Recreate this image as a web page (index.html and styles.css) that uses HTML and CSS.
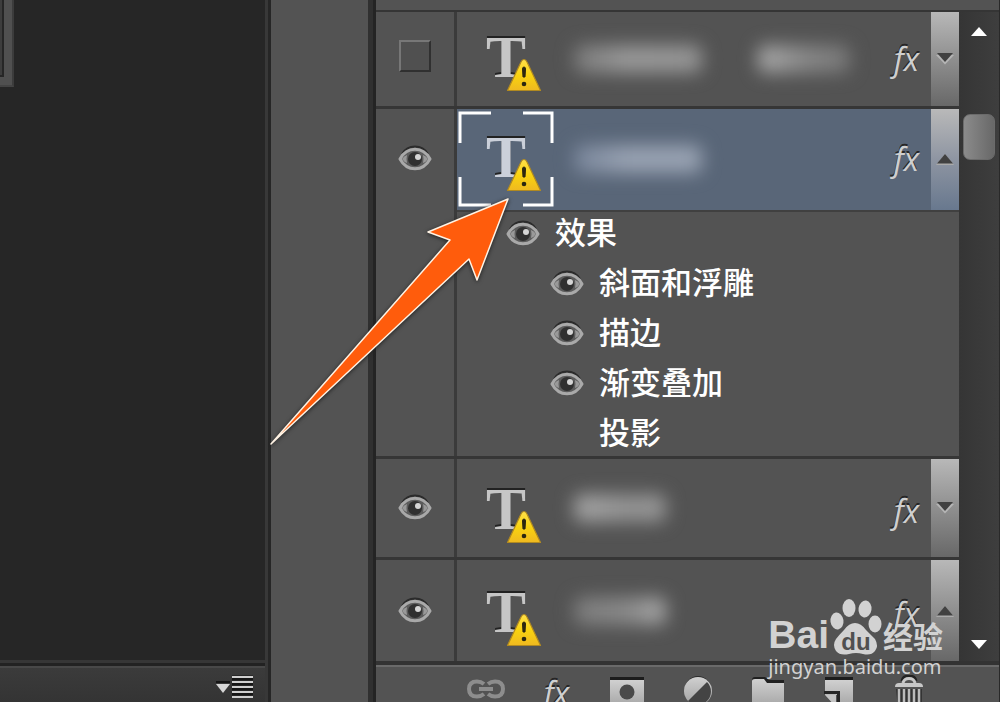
FILE: index.html
```html
<!DOCTYPE html>
<html lang="zh-CN">
<head>
  <meta charset="UTF-8">
  <meta name="viewport" content="width=device-width, initial-scale=1">
  <title>图层面板</title>
  <link rel="stylesheet" href="styles.css">
</head>
<body>
  <svg class="defs" aria-hidden="true">
    <defs>
      <linearGradient id="metal" x1="0" y1="0" x2="0" y2="1">
        <stop offset="0" stop-color="#d0d0d0"/>
        <stop offset="1" stop-color="#a2a2a2"/>
      </linearGradient>
      <linearGradient id="gold" x1="0" y1="0" x2="0" y2="1">
        <stop offset="0" stop-color="#ffe04a"/>
        <stop offset="0.5" stop-color="#f9d30f"/>
        <stop offset="1" stop-color="#efb920"/>
      </linearGradient>
      <symbol id="eye" viewBox="0 0 34 28">
        <path d="M4 9C10 -1 24 -1 30 9" fill="none" stroke="#2b2b2b" stroke-width="2"/>
        <path d="M2 14C9 1 25 1 32 14C25 27 9 27 2 14Z" fill="#5c5c5c" stroke="#a9a9a9" stroke-width="3" stroke-linejoin="round"/>
        <path d="M4 14Q6 11 9 10Q8 14 9 18Q6 17 4 14ZM30 14Q28 11 25 10Q26 14 25 18Q28 17 30 14Z" fill="#999"/>
        <circle cx="17" cy="14" r="7" fill="#303030"/>
        <circle cx="20" cy="12" r="3" fill="#d5d5d5"/>
      </symbol>
      <symbol id="warning" viewBox="0 0 36 34">
        <path d="M18 1.500Q20 1.500 21 4L34.500 32.500H1.500L15 4Q16 1.500 18 1.500Z" fill="url(#gold)" stroke="#b18a20" stroke-width="1.200" stroke-linejoin="round"/>
        <path d="M16.500 11Q16.500 9 18 9Q19.500 9 19.500 11L19 19H17Z" fill="#2c2710" stroke="#2c2710"/>
        <circle cx="18" cy="26" r="2.300" fill="#2c2710"/>
      </symbol>
      <symbol id="down" viewBox="0 0 18 12">
        <path d="M0 2H18L9 11.500Z" fill="#b5b5b5"/>
        <path d="M1 0H17L9 9Z" fill="#414141"/>
      </symbol>
      <symbol id="up" viewBox="0 0 18 12">
        <path d="M0 12H18L9 1Z" fill="#aaa"/>
        <path d="M1 10.500H17L9 1Z" fill="#414141"/>
      </symbol>
    </defs>
  </svg>

  <main class="app">
    <section class="canvas">
      <div class="document-corner"></div>
      <div class="timeline-bar">
        <button type="button" class="menu-button" aria-label="面板菜单">
          <svg width="38" height="24" viewBox="0 0 38 24">
            <path d="M0 6H14V8H0Z" fill="#151515"/>
            <path d="M0 9H14L7 18Z" fill="#d6d6d6"/>
            <path d="M16 0H37M16 5H37M16 10H37M16 15H37M16 20H37" transform="translate(0 -1)" stroke="#161616" stroke-width="3"/>
            <path d="M16 1H37M16 6H37M16 11H37M16 16H37M16 21H37" transform="translate(0 1)" stroke="#cfcfcf" stroke-width="2"/>
          </svg>
        </button>
      </div>
    </section>

    <div class="dock-gap"></div>

    <aside class="panel">
      <div class="layers">
        <div class="list">
          <div class="layer first">
            <div class="visibility"><input type="checkbox" class="hidden-box" aria-label="显示图层"></div>
            <div class="layer-body">
              <div class="thumb"><span class="type">T</span><svg class="warning"><use href="#warning"/></svg></div>
              <div class="name"><i class="smudge long"></i><i class="smudge second"></i></div>
              <span class="fx">fx</span>
              <button type="button" class="toggle" aria-label="展开效果"><svg width="18" height="12"><use href="#down"/></svg></button>
            </div>
          </div>

          <div class="layer selected">
            <div class="visibility"><button type="button" class="eye" aria-label="隐藏图层"><svg width="34" height="28"><use href="#eye"/></svg></button></div>
            <div class="layer-body">
              <div class="thumb">
                <svg class="brackets" viewBox="0 0 96 96"><path d="M2 32V2H33M65 2H94V32M94 66V94H65M33 94H2V66" fill="none" stroke="#fff" stroke-width="3"/></svg>
                <span class="type">T</span><svg class="warning"><use href="#warning"/></svg>
              </div>
              <div class="name"><i class="smudge long"></i></div>
              <span class="fx">fx</span>
              <button type="button" class="toggle" aria-label="折叠效果"><svg width="18" height="12"><use href="#up"/></svg></button>
            </div>
          </div>

          <div class="effects">
            <div class="visibility"></div>
            <ul class="effect-list">
              <li class="effect-title"><button type="button" class="eye" aria-label="隐藏效果"><svg width="34" height="28"><use href="#eye"/></svg></button><span>效果</span></li>
              <li><button type="button" class="eye" aria-label="隐藏斜面和浮雕"><svg width="34" height="28"><use href="#eye"/></svg></button><span>斜面和浮雕</span></li>
              <li><button type="button" class="eye" aria-label="隐藏描边"><svg width="34" height="28"><use href="#eye"/></svg></button><span>描边</span></li>
              <li><button type="button" class="eye" aria-label="隐藏渐变叠加"><svg width="34" height="28"><use href="#eye"/></svg></button><span>渐变叠加</span></li>
              <li><button type="button" class="eye" aria-label="显示投影"></button><span>投影</span></li>
            </ul>
          </div>

          <div class="layer">
            <div class="visibility"><button type="button" class="eye" aria-label="隐藏图层"><svg width="34" height="28"><use href="#eye"/></svg></button></div>
            <div class="layer-body">
              <div class="thumb"><span class="type">T</span><svg class="warning"><use href="#warning"/></svg></div>
              <div class="name"><i class="smudge"></i></div>
              <span class="fx">fx</span>
              <button type="button" class="toggle" aria-label="展开效果"><svg width="18" height="12"><use href="#down"/></svg></button>
            </div>
          </div>

          <div class="layer">
            <div class="visibility"><button type="button" class="eye" aria-label="隐藏图层"><svg width="34" height="28"><use href="#eye"/></svg></button></div>
            <div class="layer-body">
              <div class="thumb"><span class="type">T</span><svg class="warning"><use href="#warning"/></svg></div>
              <div class="name"><i class="smudge late"></i></div>
              <span class="fx">fx</span>
              <button type="button" class="toggle" aria-label="折叠效果"><svg width="18" height="12"><use href="#up"/></svg></button>
            </div>
          </div>
        </div>

        <div class="scrollbar">
          <button type="button" aria-label="向上滚动"><svg width="16" height="10" viewBox="0 0 16 10"><path d="M0 9L8 0L16 9Z" fill="#fff"/></svg></button>
          <div class="scroll-thumb"></div>
          <button type="button" class="scroll-down" aria-label="向下滚动"><svg width="16" height="10" viewBox="0 0 16 10"><path d="M0 1L8 10L16 1Z" fill="#fff"/></svg></button>
        </div>
      </div>

      <footer class="tools">
        <button type="button" aria-label="链接图层">
          <svg width="38" height="34" viewBox="0 0 38 34">
            <path d="M17 9Q14 6.500 10 6.500Q2 6.500 2 14Q2 21.500 10 21.500Q14 21.500 17 19M21 9Q24 6.500 28 6.500Q36 6.500 36 14Q36 21.500 28 21.500Q24 21.500 21 19M12 14H26" fill="none" stroke="#8d8d8d" stroke-width="4"/>
          </svg>
        </button>
        <button type="button" class="fx">fx</button>
        <button type="button" aria-label="添加蒙版">
          <svg width="38" height="34" viewBox="0 0 38 34">
            <path d="M2 2H36V5H2Z" fill="#1c1c1c"/>
            <path d="M2 5H36V34H2Z" fill="url(#metal)"/>
            <circle cx="19" cy="17" r="7.500" fill="#4a4a4a"/>
          </svg>
        </button>
        <button type="button" aria-label="新建调整图层">
          <svg width="38" height="34" viewBox="0 0 38 34">
            <circle cx="19" cy="14" r="13" fill="#2a2a2a"/>
            <circle cx="19" cy="16" r="14" fill="url(#metal)"/>
            <path d="M9 26L28 7A12 12 0 0 1 9 26Z" fill="#444"/>
          </svg>
        </button>
        <button type="button" aria-label="新建组">
          <svg width="38" height="34" viewBox="0 0 38 34">
            <path d="M3 5Q3 2 6 2H16L20 5H35V9H3Z" fill="#202020"/>
            <path d="M3 6Q3 4 6 4H15L18 8H35V34H3Z" fill="url(#metal)"/>
          </svg>
        </button>
        <button type="button" aria-label="新建图层">
          <svg width="38" height="34" viewBox="0 0 38 34">
            <path d="M5 2H33V5H5Z" fill="#1c1c1c"/>
            <path d="M5 5H33V34H20V20H5Z" fill="url(#metal)"/>
            <path d="M4 16H20V34H17V19H4Z" fill="#262626"/>
            <path d="M5 20H16V32Z" fill="#c4c4c4"/>
          </svg>
        </button>
        <button type="button" aria-label="删除图层">
          <svg width="38" height="34" viewBox="0 0 38 34">
            <path d="M12 6Q13 1 19 1Q25 1 26 6" fill="none" stroke="#222" stroke-width="3"/>
            <path d="M13 8Q14 3.500 19 3.500Q24 3.500 25 8" fill="none" stroke="#c8c8c8" stroke-width="3"/>
            <path d="M5 12Q5 8 9 8H29Q33 8 33 12Z" fill="#c8c8c8"/>
            <path d="M6 14H32V34H8Z" fill="#343434"/>
            <path d="M9 14V34M14 14V34M19 14V34M24 14V34M29 14V34" stroke="#bcbcbc" stroke-width="2.500"/>
          </svg>
        </button>
      </footer>

      <svg class="pointer" width="250" height="256" viewBox="0 0 250 256" aria-hidden="true">
        <path d="M242 5L162 38L184 46L5 250L203 65L211 86Z" fill="#ff5c0c" stroke="#fff3e4" stroke-width="1.500" stroke-linejoin="round"/>
      </svg>

      <div class="watermark">
        <div class="brand">
          <span class="bai">Bai</span>
          <svg class="paw" width="54" height="58" viewBox="0 0 54 58">
            <g fill="#d2d2d2">
              <ellipse cx="8" cy="23" rx="6.500" ry="8.500" transform="rotate(-8 8 23)"/>
              <ellipse cx="20" cy="10" rx="6.500" ry="9"/>
              <ellipse cx="36" cy="11" rx="6.500" ry="8.500" transform="rotate(8 36 11)"/>
              <ellipse cx="46" cy="26" rx="6.500" ry="8.500"/>
              <path d="M26 25Q32 25 37 32Q42 37 46 41Q50 48 46 53Q42 58 34 56Q27 54 20 56Q11 58 7 53Q3 47 7 41Q10 37 15 32Q20 25 26 25Z"/>
            </g>
            <text class="du" x="27" y="52" text-anchor="middle">du</text>
          </svg>
          <span class="jingyan">经验</span>
        </div>
        <div class="site">jingyan.baidu.com</div>
      </div>
    </aside>
  </main>
</body>
</html>
```
FILE: styles.css
```css
* {
  box-sizing: border-box;
}

body {
  margin: 0;
  background-color: #262626;
  color: #fff;
  font-family: "Liberation Sans", "Noto Sans CJK SC", sans-serif;
  overflow: hidden;
}

button {
  display: flex;
  align-items: center;
  justify-content: center;
  margin: 0;
  padding: 0;
  border: none;
  background: none;
  cursor: pointer;
}

svg {
  display: block;
}

.defs {
  position: absolute;
  width: 0;
  height: 0;
}

.app {
  display: flex;
  height: 100vh;
}

/* left document area */
.canvas {
  flex: 1;
  display: flex;
  flex-direction: column;
  justify-content: space-between;
  background-color: #262626;
  border-right: 3px solid #383838;
}

.document-corner {
  width: 14px;
  height: 87px;
  background: linear-gradient(#3d3d3d, #3d3d3d) 0 0 / 2px 75px no-repeat,
    linear-gradient(#262626, #262626) 0 0 / 4px 77px no-repeat, #505050;
  border-right: 2px solid #3c3c3c;
  border-bottom: 2px solid #444;
}

.timeline-bar {
  display: flex;
  justify-content: flex-end;
  height: 42px;
  padding: 12px 11px 0 0;
  border-top: 3px solid #363636;
  background: linear-gradient(#222 3px, #484848 3px, #484848 5px, #3b3b3b 5px, #343434);
}

.menu-button {
  align-self: flex-start;
}

.dock-gap {
  width: 105px;
  background-color: #535353;
  border-left: 3px solid #262626;
  border-right: 5px solid #303030;
}

/* layers panel */
.panel {
  position: relative;
  display: flex;
  flex-direction: column;
  width: 62.7%;
  padding-top: 10px;
  background-color: #535353;
  border-left: 3px solid #242424;
  border-right: 1px solid #292929;
}

.layers {
  flex: 1;
  display: flex;
  min-height: 0;
  border-top: 2px solid #353535;
  border-bottom: 4px solid #333;
}

.list {
  flex: 1;
  display: flex;
  flex-direction: column;
}

.layer {
  display: flex;
  flex: 1 1 101px;
  border-bottom: 3px solid #363636;
}

.layer.first {
  flex-basis: 97px;
}

.layer.selected,
.layer:last-child {
  border-bottom: none;
}

.visibility {
  display: flex;
  align-items: center;
  justify-content: center;
  width: 81px;
  border-right: 3px solid #3b3b3b;
}

.hidden-box {
  appearance: none;
  width: 32px;
  height: 32px;
  margin: 0 0 6px;
  border: 2px solid;
  border-color: #777 #303030 #303030 #777;
  background-color: #505050;
}

.eye {
  width: 34px;
  height: 28px;
}

.layer-body {
  flex: 1;
  display: flex;
  align-items: center;
}

.selected .layer-body {
  background-color: #596678;
}

.thumb {
  position: relative;
  display: flex;
  align-items: center;
  justify-content: center;
  width: 98px;
  height: 88px;
  padding-bottom: 4px;
}

.effects ~ .layer .thumb,
.effects ~ .layer .fx {
  margin-top: 6px;
}

.brackets {
  position: absolute;
  top: -4px;
  left: 0;
  width: 98px;
  height: 96px;
}

.type {
  font-family: "Liberation Serif", serif;
  font-weight: bold;
  font-size: 60px;
  line-height: 60px;
  color: #c6c6c6;
  text-shadow: 0 -2px 0 #222;
}

.selected .type {
  color: #cbd0da;
}

/* sits over the corner of the type thumbnail */
.warning {
  position: absolute;
  left: 49px;
  bottom: 11px;
  width: 36px;
  height: 34px;
}

.name {
  flex: 1;
  display: flex;
  gap: 56px;
  padding-left: 19px;
}

.smudge {
  width: 92px;
  height: 28px;
  border-radius: 8px;
  background: linear-gradient(90deg, #a4a4a4, #929292 60%, #969696);
  filter: blur(9px);
}

.smudge.long {
  width: 128px;
  background: linear-gradient(90deg, #7a7a7a, #989898 40%, #949494);
}

.smudge.second {
  background: linear-gradient(90deg, #aaa, #888 50%, #777);
}

.smudge.late {
  background: linear-gradient(90deg, #7c7c7c, #8a8a8a 60%, #aaa);
}

.selected .smudge {
  background: linear-gradient(90deg, #78859a, #98a2b2 40%, #98a2b2);
}

.fx {
  font-family: "Open Sans", "Noto Sans", sans-serif;
  font-style: italic;
  font-size: 32px;
  line-height: 36px;
  color: #cfcfcf;
  text-shadow: 0 -2px 0 #262626;
}

.layer .fx {
  padding-right: 12px;
}

.toggle {
  align-self: stretch;
  width: 28px;
  background: linear-gradient(#b8b8b8, #8f8f8f 50%, #686868);
}

.selected .toggle {
  background: linear-gradient(#b9b9b9, #8e95a2 50%, #68788e);
}

.effects {
  display: flex;
  flex: 1 1 250px;
  border-bottom: 3px solid #363636;
}

.effect-list {
  flex: 1;
  display: flex;
  flex-direction: column;
  gap: 6px;
  margin: 0;
  padding: 0 0 0 93px;
  border-top: 2px solid #404040;
  list-style: none;
}

.effect-list li {
  display: flex;
  align-items: center;
  gap: 15px;
  height: 44px;
  font-family: "Noto Sans CJK SC", sans-serif;
  font-size: 31px;
  font-weight: 500;
  line-height: 40px;
}

.effect-list span {
  padding-bottom: 6px;
}

.effect-list .effect-title {
  margin-left: -44px;
}

/* scrollbar */
.scrollbar {
  display: flex;
  flex-direction: column;
  align-items: center;
  width: 40px;
  padding: 15px 0 12px;
  background: linear-gradient(90deg, #353535, #3e3e3e);
}

.scroll-thumb {
  width: 32px;
  height: 46px;
  margin-top: 77px;
  border: 1px solid #6b6b6b;
  border-radius: 7px;
  background: linear-gradient(90deg, #8b8b8b, #686868);
}

.scroll-down {
  margin-top: auto;
}

/* bottom icons */
.tools {
  display: flex;
  align-items: flex-start;
  justify-content: space-between;
  height: 37px;
  padding: 8px 71px 0 91px;
  border-top: 2px solid #6a6a6a;
  overflow: hidden;
}

.tools button {
  width: 38px;
}

/* orange arrow lying over the panels */
.pointer {
  position: absolute;
  top: 194px;
  left: -110px;
  filter: drop-shadow(0 1px 2px #222);
}

.watermark {
  position: absolute;
  right: 56px;
  bottom: 24px;
  color: #d2d2d2;
}

.brand {
  display: flex;
  align-items: flex-end;
}

.bai {
  font-family: "Liberation Sans", sans-serif;
  font-weight: bold;
  font-size: 39px;
  line-height: 42px;
}

.du {
  font-family: "Liberation Sans", sans-serif;
  font-weight: bold;
  font-size: 24px;
  fill: #505050;
}

.jingyan {
  font-family: "Noto Sans CJK SC", sans-serif;
  font-weight: bold;
  font-size: 30px;
  line-height: 42px;
}

.site {
  font-family: "Noto Sans", sans-serif;
  font-size: 20px;
  line-height: 22px;
}
```
